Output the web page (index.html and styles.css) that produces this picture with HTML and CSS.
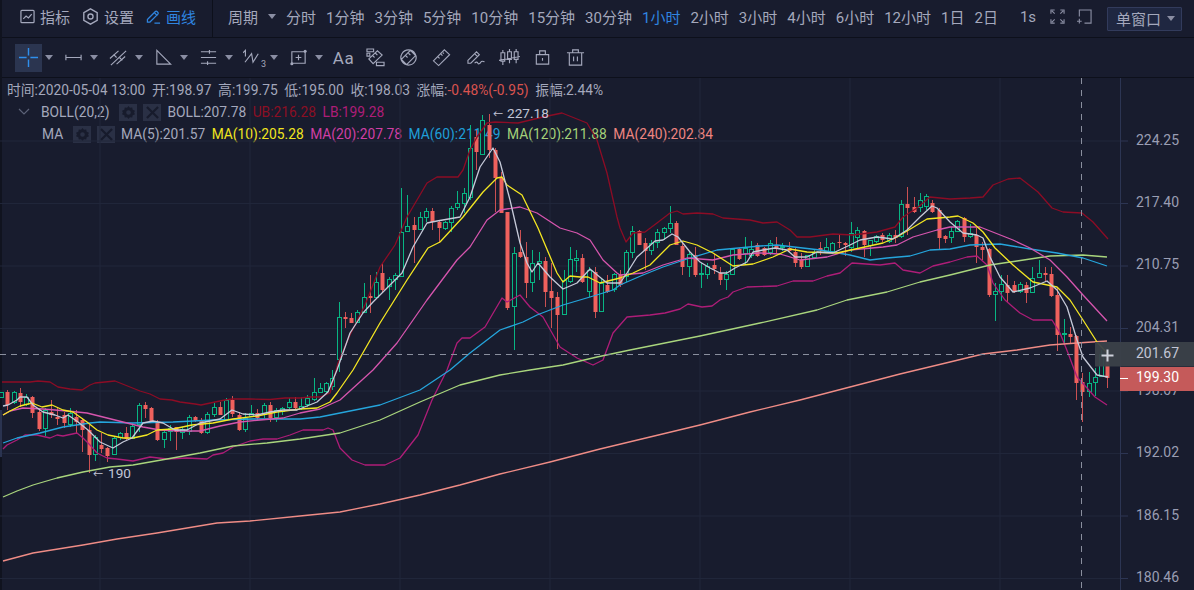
FILE: index.html
```html
<!DOCTYPE html>
<html lang="zh">
<head>
<meta charset="utf-8">
<title>K线图</title>
<link rel="stylesheet" href="styles.css">
</head>
<body>
<div class="app">
  <header class="topbar">
    <div class="top-left">
      <span class="top-item"><svg class="ti" viewBox="0 0 16 16"><rect x="1" y="1.5" width="14" height="13" rx="1"/><path d="M3.5 10.5l3-3 2.5 2 3.5-4"/></svg>指标</span>
      <span class="top-item"><svg class="ti ti-lg" viewBox="0 0 16 16"><path d="M8 .8l6.3 3.6v7.2L8 15.2 1.7 11.6V4.4z"/><circle cx="8" cy="8" r="2.4"/></svg>设置</span>
      <span class="top-item active"><svg class="ti" viewBox="0 0 16 16"><path d="M1.5 11.2L10 2.7a1.2 1.2 0 0 1 1.7 0l1 1a1.2 1.2 0 0 1 0 1.7l-8.5 8.5H1.5z"/><path d="M9 4l3 3M9 15h6"/></svg>画线</span>
    </div>
    <nav class="periods">
      <span class="period-main">周期<i class="caret"></i></span>
      <span>分时</span><span>1分钟</span><span>3分钟</span><span>5分钟</span><span>10分钟</span><span>15分钟</span><span>30分钟</span>
      <span class="active">1小时</span><span>2小时</span><span>3小时</span><span>4小时</span><span>6小时</span><span>12小时</span><span>1日</span><span>2日</span>
      <span class="sec">1s</span>
      <svg class="wi wi-a" viewBox="0 0 16 16"><path d="M1 5V1h4M2 2l3 3M11 1h4v4M14 2l-3 3M1 11v4h4M2 14l3-3M15 11v4h-4M14 14l-3-3"/></svg>
      <svg class="wi wi-b" viewBox="0 0 16 16"><path d="M2.5 8V1H15v14H8M0 13h5M2.5 10.500v5"/></svg>
      <span class="window-btn">单窗口<i class="caret"></i></span>
    </nav>
  </header>

  <div class="toolbar">
    <span class="tool selected"><svg class="tool-icon" viewBox="0 0 20 20"><path class="blue" d="M0 10h8M12 10h8M10 0v8M10 12v8"/></svg></span><i class="caret tool-caret"></i>
    <span class="tool"><svg class="tool-icon" viewBox="0 0 20 20"><path d="M2 7v6M18 7v6M2 10h16"/></svg></span><i class="caret tool-caret"></i>
    <span class="tool"><svg class="tool-icon" viewBox="0 0 20 20"><path d="M1 11l9-8M8 17l9-8M2 18L18 3"/><path d="M5 7l3 3M11 10l3 3"/></svg></span><i class="caret tool-caret"></i>
    <span class="tool"><svg class="tool-icon" viewBox="0 0 20 20"><path d="M3 2.500V17h14.500z"/></svg></span><i class="caret tool-caret"></i>
    <span class="tool"><svg class="tool-icon" viewBox="0 0 20 20"><path d="M2 4h16M2 10h16M2 16h16M11 2v4M9 14v4"/></svg></span><i class="caret tool-caret"></i>
    <span class="tool"><svg class="tool-icon tool-wide" viewBox="0 0 22 20"><path d="M0 5l2.500-2.500V9M2 15L9 6l1.500 9L16 6"/></svg><em class="sub">3</em></span><i class="caret tool-caret"></i>
    <span class="tool"><svg class="tool-icon" viewBox="0 0 20 20"><path d="M3 4h14v12H3zM10 7v6M7 10h6"/><circle cx="3" cy="16.500" r="1.600"/><circle cx="17" cy="3.500" r="1.600"/></svg></span><i class="caret tool-caret"></i>
    <span class="tool tool-plain tool-text">Aa</span>
    <span class="tool tool-plain"><svg class="tool-icon" viewBox="0 0 20 20"><path d="M1 1h7v3H1zM1 5.500h3v3H1zM11 15h8v3.500h-8zM3 11.500L12 3l5 4.500-9.500 9zM7 8l2 2M10 5.500l2 2"/></svg></span>
    <span class="tool tool-plain"><svg class="tool-icon" viewBox="0 0 20 20"><path d="M10 2a8 8 0 1 0 .01 0zM2.500 12L12 2.500l5.500 5.500L8 17.500zM7 8l2 2M10 5.500l2 2"/></svg></span>
    <span class="tool tool-plain"><svg class="tool-icon" viewBox="0 0 20 20"><path d="M1.500 13.500L13 2l5.500 5L7 18.500zM6 9l2 2M9 6l2 2M12.500 5l-1 1"/></svg></span>
    <span class="tool tool-plain tool-shift"><svg class="tool-icon tool-wide" viewBox="0 0 22 20"><path d="M2 13L11 4l3 3-9 9H2zM9 6l3 3M9 16c2-2 3-1 3.500 0s2 1 3-1 2-1 4-.5"/></svg></span>
    <span class="tool tool-plain"><svg class="tool-icon tool-wide" viewBox="0 0 22 20"><path d="M4 2v3M4 14v4M11 1v3M11 12v4M18 1v3M18 12v4M2 5h4v9H2zM9 4h4v8H9zM16 4h4v8h-4zM0 13L22 9"/></svg></span>
    <span class="tool tool-plain"><svg class="tool-icon" viewBox="0 0 20 20"><path d="M3.500 7h13v10h-13zM7 7V3h6v4M10 10.500v3"/></svg></span>
    <span class="tool tool-plain"><svg class="tool-icon" viewBox="0 0 20 20"><path d="M1 5h18M7 5V2h6v3M3.500 5v13h13V5M8 9v5M12 9v5"/></svg></span>
  </div>

  <main class="chart">
    <div class="legend">
      <div class="row row-info">时间:2020-05-04 13:00<b>开:198.97</b><b>高:199.75</b><b>低:195.00</b><b>收:198.03</b><b>涨幅:<span class="c-down">-0.48%(-0.95)</span></b><b>振幅:2.44%</b></div>
      <div class="row row-boll">
        <svg class="chev" viewBox="0 0 12 8"><path d="M1 1l5 5 5-5"/></svg>
        <span class="ind-name">BOLL(20,2)</span>
        <span class="ind-btn"><svg viewBox="0 0 14 14"><path class="gear" d="M7 0l1.500 2 2.500-.5.500 2.500 2.500 1-1 2 1 2-2.500 1-.500 2.500L8.500 12 7 14l-1.500-2-2.500.5-.5-2.500-2.500-1 1-2-1-2 2.500-1 .5-2.500 2.500.5zM7 4.500a2.500 2.500 0 1 0 0 5 2.500 2.500 0 0 0 0-5z"/></svg></span>
        <span class="ind-btn"><svg viewBox="0 0 14 14"><path class="cross" d="M1 1l12 12M13 1L1 13"/></svg></span>
        <span class="val">BOLL:207.78</span><span class="val c-ub">UB:216.28</span><span class="val c-lb">LB:199.28</span>
      </div>
      <div class="row row-ma">
        <span class="ind-name ma-name">MA</span>
        <span class="ind-btn"><svg viewBox="0 0 14 14"><path class="gear" d="M7 0l1.500 2 2.500-.5.500 2.500 2.500 1-1 2 1 2-2.500 1-.500 2.500L8.500 12 7 14l-1.500-2-2.500.5-.5-2.500-2.500-1 1-2-1-2 2.500-1 .5-2.500 2.500.5zM7 4.500a2.500 2.500 0 1 0 0 5 2.500 2.500 0 0 0 0-5z"/></svg></span>
        <span class="ind-btn"><svg viewBox="0 0 14 14"><path class="cross" d="M1 1l12 12M13 1L1 13"/></svg></span>
        <span class="val">MA(5):201.57</span><span class="val c-ma10">MA(10):205.28</span><span class="val c-ma20">MA(20):207.78</span><span class="val c-ma60">MA(60):211.49</span><span class="val c-ma120">MA(120):211.88</span><span class="val c-ma240">MA(240):202.84</span>
      </div>
    </div>

    <svg class="plot" viewBox="0 78 1194 512" width="1194" height="512">
      <path class="grid" d="M100 78V590M250 78V590M400 78V590M550 78V590M700 78V590M850 78V590M1000 78V590M0 141H1120M0 203.500H1120M0 266H1120M0 328.500H1120M0 391H1120M0 453.500H1120M0 516H1120M0 578.500H1120"/>
      <g id="candles"></g>
      <polyline class="ln ub" points="2,382 30,382 38,381 50,382 58,387 70,389 82,390 90,385 95,383 105,382 115,381 125,385 140,391 150,394 160,399 172,400 180,402 195,404 201,405 215,402 225,400 232,399 250,399 270,399.500 285,398 300,398 310,397 320,397 330,393 338,363 350,335 365,305 380,267 395,245 407,217 427,183 437,177 458,177 463,170 470,150 477,137 487,123 495,122 518,123 543,117 562,113 587,123 597,140 607,173 617,217 620,228 626,242 633,233 645,232 657,223 670,213 677,211 683,214 697,213 713,214 723,218 750,220 763,223 777,222 790,230 797,237 810,237 833,234 853,235 877,232 895,227 903,217 917,208 930,197 950,199 970,198 983,197 993,185 1008,179 1020,178 1038,192 1052,208 1063,212 1082,213 1093,222 1108,239"/>
      <polyline class="ln lb" points="3,449 7,445 17,440 25,435 37,435 50,438 57,435 63,436 77,433 83,438 90,445 97,453 107,458 117,459 133,461 150,457 167,459 187,458 207,459 213,455 223,453 233,447 250,441 263,439 277,439 290,435 303,430 323,430 328,428 333,430 340,448 352,460 365,465 385,465 400,458 418,435 432,400 447,370 457,343 462,338 470,338 485,327 502,298 507,302 520,295 530,307 543,317 560,347 577,358 593,365 603,360 613,333 627,317 650,315 665,313 680,309 688,304 702,307 712,306 720,300 728,297 733,292 747,287 777,286 793,281 813,281 827,276 840,273 852,263 880,265 895,263 903,270 920,273 933,266 950,262 967,257 977,256 987,265 993,283 1005,300 1020,313 1033,320 1052,320 1060,333 1068,353 1077,377 1087,388 1095,397 1107,405"/>
      <polyline class="ln ma240" points="3,561 33,553 83,545 117,539 157,533 217,523 250,521 300,516 340,512 380,504 420,495 460,485 500,474 550,462 600,449 650,437 700,425 750,412 800,400 850,387 900,374 950,362 983,354 1017,350 1050,345 1077,343 1107,341"/>
      <polyline class="ln ma120" points="3,497 17,491 33,485 57,478 83,472 110,467 133,465 167,459 200,453 233,446 267,443 300,439 340,433 380,420 420,402 460,385 500,375 530,370 563,365 597,357 630,350 700,336 760,323 817,310 847,300 887,292 920,282 950,275 970,270 990,265 1017,261 1050,256 1083,255 1107,257"/>
      <polyline class="ln ma60" points="3,443 17,438 40,433 63,427 90,423 100,422 133,423 173,422 213,420 253,419 300,419 320,417 340,413 380,405 420,390 450,370 470,353 500,330 523,322 537,315 563,305 590,297 613,290 620,285 643,275 663,267 687,259 717,250 760,246 777,245 820,250 850,255 870,260 887,258 910,256 930,250 950,249 970,245 1000,244 1030,249 1057,253 1083,258 1107,266"/>
      <polyline class="ln ma20" points="3,415 10,411 23,408 43,409 67,411 87,413 107,418 127,423 143,427 160,430 180,431 200,431 220,426 240,422 260,420 283,418 300,413 320,409 340,400 373,370 397,343 427,300 457,260 470,247 487,220 500,210 520,207 537,213 560,228 577,233 590,240 603,260 617,273 620,275 643,273 663,265 687,258 713,260 733,255 760,253 780,254 800,260 827,257 850,250 883,247 897,245 913,237 937,230 950,227 980,227 1013,240 1030,248 1050,260 1067,277 1083,295 1107,321"/>
      <polyline class="ln ma10" points="3,415 10,411 20,406 32,403 42,407 52,405 63,410 73,412 87,422 97,430 108,435 123,438 133,438 147,435 157,430 173,429 192,425 213,423 233,419 257,416 277,412 300,409 317,408 330,402 337,393 353,370 380,323 407,280 428,248 440,242 463,217 483,192 497,178 502,177 507,185 522,195 538,228 557,273 563,282 570,276 580,277 588,277 600,283 620,278 633,273 650,265 670,245 683,241 697,245 713,253 733,266 753,264 773,257 790,249 807,252 837,253 860,248 883,243 897,237 927,219 950,217 958,216 973,223 983,232 995,248 1013,265 1033,282 1057,287 1070,300 1083,320 1097,342 1107,353"/>
      <polyline class="ln ma5" points="3,406 8,405 17,400 20,397 27,397 33,405 43,412 55,415 63,418 68,415 78,422 88,430 100,442 113,448 123,442 132,438 143,423 153,421 163,423 175,430 187,430 200,423 220,419 232,410 243,414 257,415 270,412 283,410 297,410 317,402 328,392 337,370 350,333 363,313 373,302 393,282 402,273 413,247 427,223 437,221 460,217 470,197 480,167 493,148 500,162 510,200 520,243 527,263 532,272 538,263 550,277 563,289 577,283 590,269 607,283 620,283 627,273 637,257 645,250 655,241 663,240 672,234 678,237 690,252 700,262 710,268 720,273 727,273 735,268 747,262 753,252 763,250 775,248 787,250 795,257 807,257 817,252 833,253 850,245 860,240 877,237 893,239 907,230 920,217 932,206 937,208 950,222 963,233 977,235 983,238 990,257 1000,277 1013,292 1030,288 1047,281 1057,290 1067,307 1077,340 1083,357 1097,375 1108,377"/>
      <text class="note" x="493" y="118"><tspan class="arrow">←</tspan><tspan x="507">227.18</tspan></text>
      <text class="note" x="93" y="478"><tspan class="arrow">←</tspan><tspan x="108">190</tspan></text>
      <path class="cross-v" d="M1081.500 78V590"/>
      <path class="cross-h" d="M0 354.500H1096"/>
      <path class="axis" d="M1120.500 78V590"/>
      <path class="tick" d="M1120 141h8M1120 203.500h8M1120 266h8M1120 328.500h8M1120 391h8M1120 453.500h8M1120 516h8M1120 578.500h8"/>
      <text class="ax" x="1136" y="145">224.25</text>
      <text class="ax" x="1136" y="207">217.40</text>
      <text class="ax" x="1136" y="269">210.75</text>
      <text class="ax" x="1136" y="332">204.31</text>
      <text class="ax" x="1136" y="395">198.07</text>
      <text class="ax" x="1136" y="457">192.02</text>
      <text class="ax" x="1136" y="520">186.15</text>
      <text class="ax" x="1136" y="582">180.46</text>
      <rect class="hover-box" x="1095" y="342" width="99" height="24.500"/>
      <path class="hover-plus" d="M1107.500 349.500v12M1101.500 355.500h12"/>
      <text class="ax ax-hover" x="1136" y="358">201.67</text>
      <rect class="price-box" x="1120" y="367" width="74" height="24"/>
      <path class="price-tick" d="M1120 378.500h8"/>
      <text class="ax ax-price" x="1136" y="382">199.30</text>
    </svg>
    <span class="edge-mark"></span>
  </main>
</div>
<script src="chart.js"></script>
</body>
</html>
```
FILE: styles.css
```css
* { box-sizing: border-box; }
html, body { margin: 0; height: 100%; overflow: hidden; background: #181c2e; }
body { font-family: Roboto, "Noto Sans CJK SC", sans-serif; font-size: 15px; color: #a4a8bc; }
.app { display: flex; flex-direction: column; width: 1194px; height: 590px; border-left: 2px solid #10131f; }

.topbar { display: flex; align-items: center; height: 38px; border-bottom: 1px solid #0d101b; flex: none; }
.top-left { display: flex; align-items: center; gap: 12px; width: 211px; height: 37px; padding: 0 0 4px 18px; border-right: 1px solid #0d101b; flex: none; }
.top-item { display: flex; align-items: center; gap: 5px; white-space: nowrap; }
.top-item.active, .periods .active { color: #2f85e0; }
.ti { width: 15px; height: 15px; fill: none; stroke: currentColor; stroke-width: 1.3; }
.ti-lg { width: 17px; height: 17px; }
.periods { display: flex; align-items: center; gap: 10px; padding: 0 0 4px 15px; white-space: nowrap; }
.period-main { display: flex; align-items: center; gap: 10px; }
.caret { display: inline-block; width: 0; height: 0; border-left: 4px solid transparent; border-right: 4px solid transparent; border-top: 5px solid #8a8ea3; }
.sec { margin-left: 12px; }
.wi { width: 15px; height: 15px; fill: none; stroke: #8a8ea3; stroke-width: 1.2; }
.wi-a { margin-left: 4px; }
.wi-b { margin-left: 2px; }
.window-btn { display: flex; align-items: center; gap: 6px; height: 24px; width: 75px; padding-left: 8px; margin: 4px 0 0 5px; border: 1px solid #323b5c; background: #1f2741; border-radius: 1px; }

.toolbar { display: flex; align-items: center; height: 40px; padding-left: 13px; border-bottom: 1px solid #0d101b; flex: none; }
.tool { display: flex; align-items: center; justify-content: center; position: relative; width: 27px; height: 28px; color: #a4a8bc; flex: none; }
.tool.selected { background: #2b3550; }
.tool-plain { margin-right: 6px; }
.tool-shift { margin-left: 2px; }
.tool-caret { margin: 0 7px 0 3px; flex: none; }
.tool-icon { width: 19px; height: 19px; fill: none; stroke: #a4a8bc; stroke-width: 1.2; }
.tool-wide { width: 21px; }
.tool-icon .blue { stroke: #2f8fec; stroke-width: 1.5; }
.tool-icon circle { fill: #a4a8bc; stroke: none; }
.tool-text { font-size: 17px; letter-spacing: .5px; margin-right: 5px; }
.sub { position: absolute; right: 1px; bottom: 3px; font-size: 9px; font-style: normal; }

.chart { position: relative; flex: 1; min-height: 0; }
.legend { position: absolute; left: 5px; top: 1px; display: flex; flex-direction: column; white-space: nowrap; font-size: 13.8px; line-height: 22px; }
.row { display: flex; align-items: center; height: 22px; }
.row-info b { font-weight: 400; margin-left: 6.6px; }
.c-down { color: #d9534f; }
.chev { width: 12px; height: 8px; margin: 0 11px 0 11px; fill: none; stroke: #5c6278; stroke-width: 1.2; }
.ind-name { margin-right: 10px; }
.row-ma { padding-left: 35px; }
.ma-name { width: 23px; margin-right: 8px; }
.ind-btn { display: flex; align-items: center; justify-content: center; width: 18px; height: 17px; background: #2a3045; margin-right: 6px; }
.ind-btn svg { width: 13px; height: 13px; }
.gear { fill: #171b2c; fill-rule: evenodd; }
.cross { fill: none; stroke: #171b2c; stroke-width: 2.4; }
.val { margin-right: 6.5px; }
.c-ub { color: #8c0f24; }
.c-lb { color: #ae1d78; }
.c-ma10 { color: #f1e51e; }
.c-ma20 { color: #d03fa5; }
.c-ma60 { color: #1f9fd8; }
.c-ma120 { color: #a4d27a; }
.c-ma240 { color: #ee8580; }

.plot { display: block; position: absolute; left: -2px; top: 0; overflow: hidden; }
.grid { fill: none; stroke: #20263a; stroke-width: 1; }
.ln { fill: none; stroke-width: 1.3; stroke-linejoin: round; }
.ub { stroke: #8c0c25; }
.lb { stroke: #ae1d78; }
.ma5 { stroke: #c6cad9; }
.ma10 { stroke: #f4e722; }
.ma20 { stroke: #d655ae; }
.ma60 { stroke: #25a5dc; }
.ma120 { stroke: #a9d57d; }
.ma240 { stroke: #ef8c86; }
.wick-r { stroke: #ca5052; stroke-width: 1; }
.wick-g { stroke: #08b583; stroke-width: 1; }
.body-r { fill: #ef615d; stroke: none; }
.body-g { fill: #181c2e; stroke: #08b583; stroke-width: 1; }
.note { fill: #c2c6d6; font-size: 13.6px; }
.arrow { font-size: 10px; }
.cross-v { stroke: #8a8f9e; stroke-width: 1; stroke-dasharray: 6 6; }
.cross-h { stroke: #8a8f9e; stroke-width: 1; stroke-dasharray: 6 5; }
.axis { stroke: #2c3553; stroke-width: 1; }
.tick { stroke: #2c3553; stroke-width: 1; fill: none; }
.ax { fill: #9a9eb3; font-size: 14px; }
.hover-box { fill: #3b4149; fill-opacity: .95; }
.hover-plus { stroke: #cfd2dc; stroke-width: 2; }
.ax-hover { fill: #c2c6d6; }
.price-box { fill: #c55a5a; }
.price-tick { stroke: #fff; stroke-width: 1; }
.ax-price { fill: #fff; }
.edge-mark { position: absolute; left: -2px; top: 332px; width: 2px; height: 47px; background: #2a3350; }
```
FILE: chart.js
```js
// [colour, high, bodyTop, bodyBottom, low] in page pixels, one candle every 6.25px
var candles = [
['g',392,392,398,398],['r',390,392,405,410],['g',391,392,403,404],['r',388,393,402,407],['g',394,397,405,406],['r',396,397,413,418],['r',410,412,429,431],['g',408,410,429,436],['r',400,412,415,418],['r',408,417,419,425],
['r',412,415,423,428],['g',408,413,425,427],['r',410,417,422,433],['r',418,420,430,452],['r',425,430,455,473],['g',435,437,455,461],['r',433,445,449,453],['r',447,448,456,462],['g',437,438,455,455],['g',432,433,438,440],
['r',427,433,439,440],['g',423,426,439,439],['g',403,405,425,432],['r',402,405,409,418],['r',407,408,422,423],['r',420,422,440,441],['g',430,432,440,448],['g',425,428,432,441],['r',427,427,432,450],['g',427,429,433,439],
['g',415,417,432,435],['r',416,417,421,422],['r',418,420,433,434],['g',412,414,433,434],['g',403,407,415,417],['r',402,407,415,415],['g',398,400,420,420],['r',396,400,414,417],['r',412,415,430,431],['g',413,418,430,432],
['g',405,413,417,417],['r',409,413,418,420],['g',403,405,415,418],['r',402,405,418,422],['g',408,410,418,422],['g',407,408,412,415],['g',398,402,408,409],['r',397,402,408,410],['g',397,406,409,410],['g',395,398,405,407],
['g',378,392,400,401],['g',383,388,393,393],['g',382,383,392,393],['g',370,378,387,390],['g',302,317,360,372],['r',312,317,319,328],['r',313,318,323,323],['g',310,312,323,323],['g',283,297,313,313],['r',275,296,298,313],
['g',272,282,298,298],['r',263,273,290,292],['g',277,279,287,300],['g',273,275,280,290],['g',188,232,277,277],['g',195,226,232,232],['r',217,225,230,263],['g',212,217,230,230],['g',208,211,218,222],['r',208,211,222,230],
['r',221,222,228,243],['g',221,222,229,230],['g',206,208,223,232],['g',191,203,208,210],['g',188,193,204,213],['g',125,148,198,200],['r',130,137,152,170],['g',115,120,155,155],['r',114,125,150,158],['r',148,150,178,212],
['r',172,178,213,213],['r',212,212,308,310],['g',247,253,307,350],['r',230,252,257,258],['r',242,257,283,298],['g',250,263,283,292],['g',252,261,264,280],['r',257,261,292,307],['r',263,291,298,328],['r',292,297,315,349],
['g',270,280,315,315],['g',247,259,282,283],['g',250,258,261,272],['r',254,258,282,283],['g',267,270,292,297],['r',267,272,312,318],['g',278,283,312,312],['r',275,285,292,293],['g',273,274,290,292],['r',270,275,285,287],
['g',250,252,277,282],['g',226,231,253,258],['r',230,231,245,245],['r',238,243,251,270],['g',240,243,251,255],['g',229,232,243,248],['g',227,228,233,240],['g',206,223,229,233],['r',221,223,245,245],['r',243,246,267,275],
['g',252,254,267,277],['r',247,255,275,277],['g',263,273,275,288],['g',263,266,275,279],['r',254,265,269,274],['r',267,273,280,285],['g',271,274,280,290],['g',248,249,275,275],['r',248,249,259,260],['g',237,248,254,265],
['g',241,249,256,258],['r',243,245,256,257],['r',247,248,255,256],['g',240,243,253,255],['r',237,245,248,253],['g',243,246,248,251],['r',242,248,251,252],['r',248,252,263,267],['r',253,260,267,269],['g',255,255,267,267],
['g',250,252,258,258],['r',242,248,250,255],['g',238,247,252,253],['g',242,243,252,253],['r',235,242,243,248],['r',242,243,245,256],['g',222,233,248,252],['g',227,230,238,248],['r',230,231,245,257],['g',240,240,246,256],
['g',235,236,242,243],['r',233,235,240,242],['g',233,235,242,243],['r',230,235,238,243],['g',200,204,237,238],['r',187,204,208,235],['r',197,207,212,213],['g',193,200,208,212],['g',194,196,207,210],['r',200,203,212,213],
['r',208,210,238,249],['r',235,236,239,243],['g',227,231,238,243],['g',220,221,232,232],['r',217,218,237,242],['g',224,233,237,238],['r',228,235,247,263],['r',242,247,250,260],['r',248,249,295,297],['g',283,291,295,321],
['g',275,284,292,301],['r',275,285,293,302],['r',281,285,292,293],['g',282,284,292,293],['r',282,285,293,303],['g',267,278,293,293],['g',260,273,278,278],['r',267,273,275,282],['r',267,274,296,297],['r',288,295,335,351],
['g',319,333,335,343],['r',327,334,337,343],['r',335,336,383,400],['r',373,382,392,422],['g',372,383,392,397],['g',368,377,383,396],['g',350,354,377,377],['r',350,355,378,388]
];
var NS = 'http://www.w3.org/2000/svg';
var group = document.getElementById('candles');
function add(tag, attrs) {
  var el = document.createElementNS(NS, tag);
  for (var k in attrs) el.setAttribute(k, attrs[k]);
  group.appendChild(el);
}
candles.forEach(function (c, i) {
  var x = Math.round(1.05 + 6.25 * i);
  add('line', { x1: x + 0.5, x2: x + 0.5, y1: c[1], y2: c[4], 'class': 'wick-' + c[0] });
  if (c[0] === 'r') {
    add('rect', { x: x - 1.5, y: c[2], width: 4, height: Math.max(c[3] - c[2], 1), 'class': 'body-r' });
  } else {
    add('rect', { x: x - 1.5, y: c[2] + 0.5, width: 4, height: Math.max(c[3] - c[2] - 1, 1), 'class': 'body-g' });
  }
});
```
